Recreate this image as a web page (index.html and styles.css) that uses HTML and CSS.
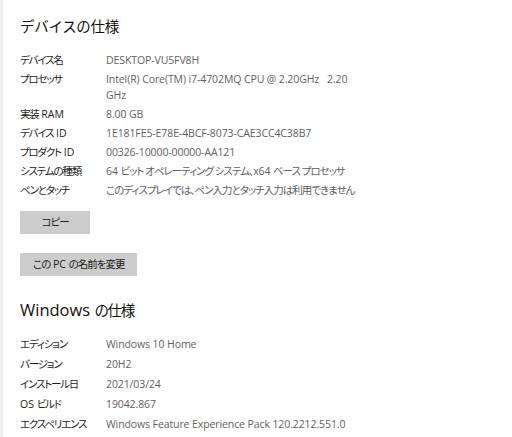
FILE: index.html
```html
<!DOCTYPE html>
<html lang="ja">
<head>
<meta charset="utf-8">
<link rel="stylesheet" href="styles.css">
</head>
<body>
<div class="page">
  <section class="spec spec-device">
    <h2 class="title"><span class="ja">デバイスの仕様</span></h2>
    <dl class="rows">
      <dt>デバイス名</dt><dd>DESKTOP-VU5FV8H</dd>
      <dt>プロセッサ</dt><dd>Intel(R) Core(TM) i7-4702MQ CPU @ 2.20GHz&nbsp;&nbsp;&nbsp;2.20<br>GHz</dd>
      <dt>実装<span class="lat"> RAM</span></dt><dd>8.00 GB</dd>
      <dt>デバイス<span class="lat"> ID</span></dt><dd>1E181FE5-E78E-4BCF-8073-CAE3CC4C38B7</dd>
      <dt>プロダクト<span class="lat"> ID</span></dt><dd>00326-10000-00000-AA121</dd>
      <dt>システムの種類</dt><dd>64 <span class="ja">ビット オペレーティング システム、</span>x64 <span class="ja">ベース プロセッサ</span></dd>
      <dt>ペンとタッチ</dt><dd><span class="ja">このディスプレイでは、ペン入力とタッチ入力は利用できません</span></dd>
    </dl>
    <div class="actions">
      <button class="btn btn-copy"><span class="ja">コピー</span></button>
      <button class="btn"><span class="ja">この</span> PC <span class="ja">の名前を変更</span></button>
    </div>
  </section>
  <section class="spec spec-windows">
    <h2 class="title"><span class="lat">Windows</span> <span class="ja ja-short">の仕様</span></h2>
    <dl class="rows rows-wide">
      <dt>エディション</dt><dd>Windows 10 Home</dd>
      <dt>バージョン</dt><dd>20H2</dd>
      <dt>インストール日</dt><dd>2021/03/24</dd>
      <dt><span class="lat">OS </span>ビルド</dt><dd>19042.867</dd>
      <dt>エクスペリエンス</dt><dd>Windows Feature Experience Pack 120.2212.551.0</dd>
    </dl>
  </section>
</div>
</body>
</html>
```
FILE: styles.css
```css
html, body {
  margin: 0;
  padding: 0;
  background: #ffffff;
}
body {
  font-family: "Open Sans", "Noto Sans CJK JP", sans-serif;
  font-feature-settings: "palt";
  color: #1c1c1c;
}
.page {
  width: 512px;
  height: 437px;
  box-sizing: border-box;
  padding: 14px 0 0 17px;
  border-left: 3px solid #f3f1ee;
  overflow: hidden;
}
.ja {
  letter-spacing: -1px;
}
.title {
  margin: 0;
  font-weight: 400;
  font-size: 16.5px;
  line-height: 24px;
  color: #111;
  letter-spacing: 0;
}
.title .ja {
  font-size: 14.5px;
  font-feature-settings: normal;
  letter-spacing: -0.3px;
}
.title .ja-short {
  letter-spacing: -1.4px;
}
.rows {
  display: grid;
  grid-template-columns: 86px 1fr;
  row-gap: 3px;
  margin: 13px 0 0 0;
  font-size: 10.5px;
  line-height: 16px;
}
.rows dt {
  margin: 0;
  color: #1c1c1c;
  letter-spacing: -1.2px;
  white-space: pre;
}
.rows dt .lat {
  letter-spacing: 0;
}
.rows dd {
  margin: 0;
  color: #5e5e5e;
  letter-spacing: -0.1px;
}
.rows dd .ja {
  letter-spacing: -1px;
}
.rows-wide {
  row-gap: 4px;
}
.actions {
  display: flex;
  flex-direction: column;
  align-items: flex-start;
  gap: 19px;
  margin-top: 13px;
}
.btn {
  font: inherit;
  font-size: 10.5px;
  line-height: 23px;
  height: 23px;
  padding: 0 13px;
  border: 0;
  background: #cccccc;
  color: #1c1c1c;
}
.btn-copy {
  width: 70px;
  padding: 0;
}
.spec-windows {
  margin-top: 22px;
}
```
